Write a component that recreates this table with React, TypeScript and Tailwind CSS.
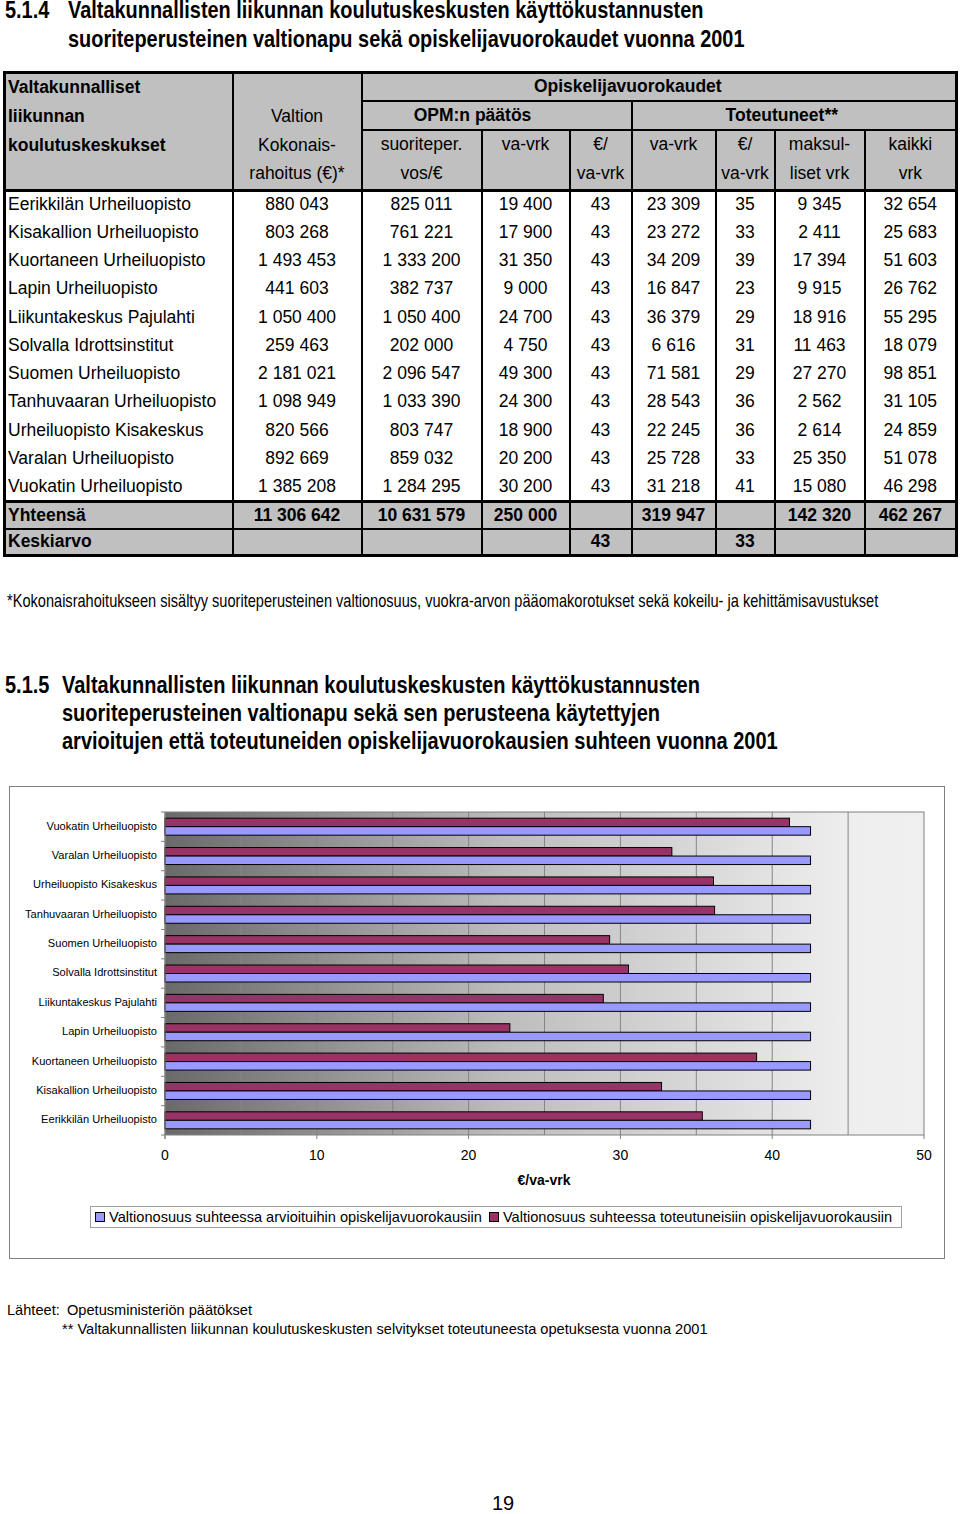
import React from "react";

const rows: string[][] = [
  ["Eerikkilän Urheiluopisto", "880 043", "825 011", "19 400", "43", "23 309", "35", "9 345", "32 654"],
  ["Kisakallion Urheiluopisto", "803 268", "761 221", "17 900", "43", "23 272", "33", "2 411", "25 683"],
  ["Kuortaneen Urheiluopisto", "1 493 453", "1 333 200", "31 350", "43", "34 209", "39", "17 394", "51 603"],
  ["Lapin Urheiluopisto", "441 603", "382 737", "9 000", "43", "16 847", "23", "9 915", "26 762"],
  ["Liikuntakeskus Pajulahti", "1 050 400", "1 050 400", "24 700", "43", "36 379", "29", "18 916", "55 295"],
  ["Solvalla Idrottsinstitut", "259 463", "202 000", "4 750", "43", "6 616", "31", "11 463", "18 079"],
  ["Suomen Urheiluopisto", "2 181 021", "2 096 547", "49 300", "43", "71 581", "29", "27 270", "98 851"],
  ["Tanhuvaaran Urheiluopisto", "1 098 949", "1 033 390", "24 300", "43", "28 543", "36", "2 562", "31 105"],
  ["Urheiluopisto Kisakeskus", "820 566", "803 747", "18 900", "43", "22 245", "36", "2 614", "24 859"],
  ["Varalan Urheiluopisto", "892 669", "859 032", "20 200", "43", "25 728", "33", "25 350", "51 078"],
  ["Vuokatin Urheiluopisto", "1 385 208", "1 284 295", "30 200", "43", "31 218", "41", "15 080", "46 298"],
];

const colWidths = [228, 129, 120, 88, 62, 84, 59, 90, 92];

const num = (s: string) => Number(s.replace(/ /g, ""));

const chartData = [...rows].reverse().map((r) => ({
  name: r[0],
  est: num(r[2]) / num(r[3]),
  real: num(r[2]) / num(r[5]),
}));

function Chart() {
  const x0 = 155;
  const x1 = 914;
  const top = 25;
  const bottom = 348;
  const sc = (x1 - x0) / 50;
  const band = (bottom - top) / chartData.length;
  const grid = [5, 10, 15, 20, 25, 30, 35, 40, 45];
  return (
    <svg width={934} height={410} className="block">
      <defs>
        <linearGradient id="bg" x1="0" x2="1" y1="0" y2="0">
          <stop offset="0" stopColor="#6a6a6a" />
          <stop offset="0.45" stopColor="#bdbdbd" />
          <stop offset="0.9" stopColor="#eeeeee" />
          <stop offset="1" stopColor="#f0f0f0" />
        </linearGradient>
      </defs>
      <rect x={x0} y={top} width={x1 - x0} height={bottom - top} fill="url(#bg)" />
      {grid.map((g) => (
        <line key={g} x1={x0 + g * sc} x2={x0 + g * sc} y1={top} y2={bottom} stroke="#858585" strokeWidth={1} />
      ))}
      <rect x={x0} y={top} width={x1 - x0} height={bottom - top} fill="none" stroke="#808080" strokeWidth={1} />
      {chartData.map((d, i) => {
        const c = top + band * i + band / 2;
        return (
          <g key={d.name}>
            <rect x={x0} y={c - 8.5} width={d.real * sc} height={8.5} fill="#993366" stroke="#000" strokeWidth={1} />
            <rect x={x0} y={c} width={d.est * sc} height={8.5} fill="#9999ff" stroke="#000" strokeWidth={1} />
            <text
              x={147}
              y={c}
              textAnchor="end"
              dominantBaseline="middle"
              fontSize={11.1}
              fontFamily="'Liberation Sans', Arial, sans-serif"
              fill="#000"
            >
              {d.name}
            </text>
          </g>
        );
      })}
      {Array.from({ length: chartData.length + 1 }).map((_, i) => (
        <line key={i} x1={x0 - 4} x2={x0} y1={top + band * i} y2={top + band * i} stroke="#808080" strokeWidth={1} />
      ))}
      <line x1={x0} x2={x0} y1={top} y2={bottom + 4} stroke="#808080" strokeWidth={1} />
      {[0, 10, 20, 30, 40, 50].map((v) => (
        <g key={v}>
          <line x1={x0 + v * sc} x2={x0 + v * sc} y1={bottom} y2={bottom + 4} stroke="#808080" strokeWidth={1} />
          <text
            x={x0 + v * sc}
            y={369}
            textAnchor="middle"
            dominantBaseline="middle"
            fontSize={14}
            fontFamily="'Liberation Sans', Arial, sans-serif"
            fill="#000"
          >
            {v}
          </text>
        </g>
      ))}
      <text
        x={534}
        y={394}
        textAnchor="middle"
        dominantBaseline="middle"
        fontSize={14}
        fontWeight="bold"
        fontFamily="'Liberation Sans', Arial, sans-serif"
        fill="#000"
      >
        €/va-vrk
      </text>
    </svg>
  );
}

const hdr = "bg-[#c0c0c0]";
const lineH = "h-[28.75px] flex items-center";
const narrowText = "inline-block whitespace-nowrap origin-left scale-x-[0.82]";

export default function App() {
  return (
    <div className="w-[960px] min-h-[1514px] bg-white text-black font-['Liberation_Sans',Arial,sans-serif] overflow-hidden">
      {/* Title 1 */}
      <div className="text-[24.3px] font-bold pl-[5px]">
        <div className="flex leading-[18px] h-[18px] pt-[1px]">
          <div className="w-[63px] shrink-0">
            <span className={narrowText}>5.1.4</span>
          </div>
          <span className={narrowText}>Valtakunnallisten liikunnan koulutuskeskusten käyttökustannusten</span>
        </div>
        <div className="mt-[5.5px] leading-[29px] pl-[63px]">
          <span className={narrowText}>suoriteperusteinen valtionapu sekä opiskelijavuorokaudet vuonna 2001</span>
        </div>
      </div>

      {/* Table */}
      <table className="mt-[18px] ml-[3px] w-[954px] table-fixed border-collapse border-[3px] border-black text-[17.5px] leading-none">
        <colgroup>
          {colWidths.map((w, i) => (
            <col key={i} style={{ width: w }} />
          ))}
        </colgroup>
        <thead>
          <tr className="h-[28.75px]">
            <td rowSpan={4} className={`${hdr} border-r-2 border-black align-top p-0 font-bold`}>
              <div className={`${lineH} pl-[2px]`}>Valtakunnalliset</div>
              <div className={`${lineH} pl-[2px]`}>liikunnan</div>
              <div className={`${lineH} pl-[2px]`}>koulutuskeskukset</div>
              <div className={lineH}></div>
            </td>
            <td rowSpan={4} className={`${hdr} border-r-2 border-black align-top p-0 text-center`}>
              <div className={lineH}></div>
              <div className={`${lineH} justify-center`}>Valtion</div>
              <div className={`${lineH} justify-center`}>Kokonais-</div>
              <div className={`${lineH} justify-center`}>rahoitus (€)*</div>
            </td>
            <td colSpan={7} className={`${hdr} border-b-2 border-black p-0 font-bold text-center pr-[62px]`}>
              Opiskelijavuorokaudet
            </td>
          </tr>
          <tr className="h-[28.75px]">
            <td colSpan={3} className={`${hdr} border-b-2 border-r-2 border-black p-0 font-bold text-center pr-[48px]`}>
              OPM:n päätös
            </td>
            <td colSpan={4} className={`${hdr} border-b-2 border-black p-0 font-bold text-center pr-[24px]`}>
              Toteutuneet**
            </td>
          </tr>
          <tr className="h-[57.5px]">
            {[
              ["suoriteper.", "vos/€"],
              ["va-vrk", ""],
              ["€/", "va-vrk"],
              ["va-vrk", ""],
              ["€/", "va-vrk"],
              ["maksul-", "liset vrk"],
              ["kaikki", "vrk"],
            ].map((c, i) => (
              <td key={i} className={`${hdr} border-x-2 border-black p-0 text-center align-top`}>
                <div className={`${lineH} justify-center`}>{c[0]}</div>
                <div className={`${lineH} justify-center`}>{c[1]}</div>
              </td>
            ))}
          </tr>
        </thead>
        <tbody>
          {rows.map((r, ri) => (
            <tr key={ri} className="h-[28.3px]">
              {r.map((c, ci) => (
                <td
                  key={ci}
                  className={`border-x-2 border-black p-0 ${ri === 0 ? "border-t-[3px]" : ""} ${
                    ci === 0 ? "text-left pl-[2px]" : "text-center"
                  }`}
                >
                  {c}
                </td>
              ))}
            </tr>
          ))}
          <tr className="h-[27.5px] font-bold">
            {["Yhteensä", "11 306 642", "10 631 579", "250 000", "", "319 947", "", "142 320", "462 267"].map((c, ci) => (
              <td
                key={ci}
                className={`${hdr} border-x-2 border-t-[3px] border-black p-0 ${ci === 0 ? "text-left pl-[2px]" : "text-center"}`}
              >
                {c}
              </td>
            ))}
          </tr>
          <tr className="h-[27px] font-bold">
            {["Keskiarvo", "", "", "", "43", "", "33", "", ""].map((c, ci) => (
              <td
                key={ci}
                className={`${hdr} border-x-2 border-t-2 border-black p-0 ${ci === 0 ? "text-left pl-[2px]" : "text-center"}`}
              >
                {c}
              </td>
            ))}
          </tr>
        </tbody>
      </table>

      {/* Footnote */}
      <div className="mt-[34px] pl-[7px] leading-[20px] text-[17.8px]">
        <span className={narrowText}>
          *Kokonaisrahoitukseen sisältyy suoriteperusteinen valtionosuus, vuokra-arvon pääomakorotukset sekä kokeilu- ja kehittämisavustukset
        </span>
      </div>

      {/* Title 2 */}
      <div className="mt-[60px] leading-[28px] text-[24.4px] font-bold flex pl-[5px]">
        <div className="w-[57px] shrink-0">
          <span className={narrowText}>5.1.5</span>
        </div>
        <div>
          <div>
            <span className={narrowText}>Valtakunnallisten liikunnan koulutuskeskusten käyttökustannusten</span>
          </div>
          <div>
            <span className={narrowText}>suoriteperusteinen valtionapu sekä sen perusteena käytettyjen</span>
          </div>
          <div>
            <span className={narrowText}>arvioitujen että toteutuneiden opiskelijavuorokausien suhteen vuonna 2001</span>
          </div>
        </div>
      </div>

      {/* Chart */}
      <div className="mt-[31px] ml-[9px] w-[936px] h-[473px] border border-[#808080]">
        <Chart />
        <div className="mt-[9px] ml-[80px] w-[812px] h-[22px] border border-[#a0a0a0] flex items-center text-[14.6px] leading-none">
          <div className="ml-[4px] w-[10px] h-[10px] bg-[#9999ff] border border-black" />
          <div className="ml-[4px]">Valtionosuus suhteessa arvioituihin opiskelijavuorokausiin</div>
          <div className="ml-[7px] w-[10px] h-[10px] bg-[#993366] border border-black" />
          <div className="ml-[4px]">Valtionosuus suhteessa toteutuneisiin opiskelijavuorokausiin</div>
        </div>
      </div>

      {/* Sources */}
      <div className="mt-[42px] pl-[7px] text-[14.6px] leading-[19px]">
        <div className="flex">
          <div className="w-[60px] shrink-0">Lähteet:</div>
          <div>Opetusministeriön päätökset</div>
        </div>
        <div className="pl-[55px]">** Valtakunnallisten liikunnan koulutuskeskusten selvitykset toteutuneesta opetuksesta vuonna 2001</div>
      </div>

      {/* Page number */}
      <div className="mt-[154px] text-center pl-[46px] text-[20px] leading-[20px]">19</div>
    </div>
  );
}
